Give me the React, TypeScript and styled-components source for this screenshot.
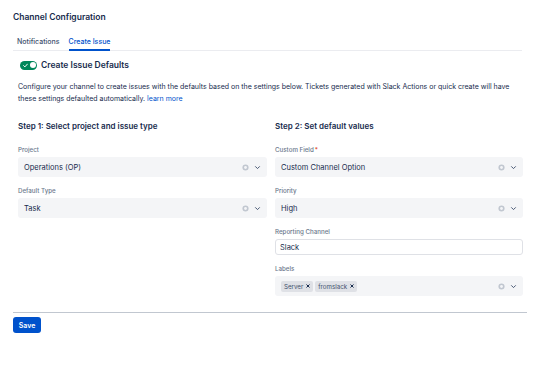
import React from "react"
import styled, { createGlobalStyle } from "styled-components"

const GlobalStyle = createGlobalStyle`
  body {
    margin: 0;
    background: #ffffff;
    font-family: Inter, "Liberation Sans", sans-serif;
    color: #172b4d;
  }
`

const Page = styled.div`
  width: 514px;
  padding: 11px 0 0 13px;
`

const Title = styled.h1`
  margin: 0;
  font-size: 8.5px;
  line-height: 12px;
  font-weight: 600;
`

const TabBar = styled.div`
  display: flex;
  gap: 9px;
  margin-top: 13px;
  padding-left: 4px;
  width: 505px;
  border-bottom: 1px solid #ebecf0;
`

const Tab = styled.div<{ $active?: boolean }>`
  font-size: 7px;
  line-height: 12px;
  padding-bottom: 1px;
  font-weight: 500;
  color: ${p => (p.$active ? "#0052cc" : "#42526e")};
  border-bottom: 2px solid ${p => (p.$active ? "#0052cc" : "transparent")};
  margin-bottom: -1px;
`

const Content = styled.div`
  padding: 0 4px 0 5px;
`

const ToggleRow = styled.div`
  display: flex;
  align-items: center;
  gap: 4px;
  margin-top: 8px;
  padding-left: 2px;
`

const Toggle = styled.div`
  position: relative;
  width: 17px;
  height: 9px;
  border-radius: 5px;
  background: #00875a;
`

const Knob = styled.div`
  position: absolute;
  right: 1.5px;
  top: 1.5px;
  width: 6px;
  height: 6px;
  border-radius: 50%;
  background: #ffffff;
`

const ToggleLabel = styled.span`
  font-size: 8.5px;
  line-height: 12px;
  font-weight: 600;
`

const Intro = styled.p`
  margin: 10px 0 0;
  font-size: 7px;
  line-height: 11.5px;
  color: #172b4d;
`

const Link = styled.a`
  color: #0052cc;
  text-decoration: none;
`

const Columns = styled.div`
  display: grid;
  grid-template-columns: 249px 248px;
  gap: 8px;
  margin-top: 16px;
`

const Column = styled.div`
  display: flex;
  flex-direction: column;
`

const StepTitle = styled.h2`
  margin: 0 0 13px;
  font-size: 8px;
  line-height: 12px;
  font-weight: 600;
`

const Field = styled.div`
  display: flex;
  flex-direction: column;
  & + & {
    margin-top: 9px;
  }
`

const Label = styled.label`
  font-size: 6.2px;
  line-height: 10px;
  margin-bottom: 2px;
  color: #6b778c;
  font-weight: 500;
`

const Required = styled.span`
  color: #de350b;
  margin-left: 1px;
`

const Select = styled.div`
  display: flex;
  align-items: center;
  height: 20px;
  padding: 0 6px;
  background: #f4f5f7;
  border-radius: 3px;
  font-size: 7.5px;
`

const Value = styled.span`
  flex: 1;
`

const Tags = styled.div`
  flex: 1;
  display: flex;
  gap: 2px;
`

const Tag = styled.span`
  display: flex;
  align-items: center;
  gap: 3px;
  height: 11px;
  padding: 0 3px;
  background: #dfe1e6;
  border-radius: 2px;
  font-size: 6.2px;
  color: #42526e;
`

const Input = styled.div`
  display: flex;
  align-items: center;
  height: 16px;
  box-sizing: border-box;
  padding: 0 4px;
  border: 1px solid #dfe1e6;
  border-radius: 3px;
  font-size: 7.5px;
`

const Icons = styled.div`
  display: flex;
  align-items: center;
  gap: 5px;
`

const Footer = styled.div`
  display: flex;
  margin-top: 16px;
  border-top: 1px solid #c1c7d0;
  padding-top: 4px;
`

const Button = styled.button`
  height: 16px;
  width: 28px;
  padding: 0;
  border: none;
  border-radius: 3px;
  background: #0052cc;
  color: #ffffff;
  font-family: inherit;
  font-size: 7px;
  font-weight: 600;
`

const ClearIcon = () => (
  <svg width="7" height="7" viewBox="0 0 16 16">
    <circle cx="8" cy="8" r="7" fill="#c1c7d0" />
    <circle cx="8" cy="8" r="3.2" fill="#f4f5f7" />
  </svg>
)

const Chevron = () => (
  <svg width="7" height="7" viewBox="0 0 16 16">
    <path d="M3.5 6l4.5 4.5L12.5 6" fill="none" stroke="#42526e" strokeWidth="2.2" strokeLinecap="round" strokeLinejoin="round" />
  </svg>
)

const SmallX = () => (
  <svg width="4" height="4" viewBox="0 0 8 8">
    <path d="M1.5 1.5l5 5M6.5 1.5l-5 5" stroke="#172b4d" strokeWidth="2" strokeLinecap="round" />
  </svg>
)

const Check = () => (
  <svg width="5" height="5" viewBox="0 0 8 8" style={{ position: "absolute", left: 2.5, top: 2 }}>
    <path d="M1 4.2l2 2L7 1.8" fill="none" stroke="#ffffff" strokeWidth="1.6" strokeLinecap="round" strokeLinejoin="round" />
  </svg>
)

const SelectField = ({ label, value, required }: { label: string; value: string; required?: boolean }) => (
  <Field>
    <Label>
      {label}
      {required && <Required>*</Required>}
    </Label>
    <Select>
      <Value>{value}</Value>
      <Icons>
        <ClearIcon />
        <Chevron />
      </Icons>
    </Select>
  </Field>
)

const App = (): JSX.Element => (
  <Page>
    <GlobalStyle />
    <Title>Channel Configuration</Title>
    <TabBar>
      <Tab>Notifications</Tab>
      <Tab $active>Create Issue</Tab>
    </TabBar>
    <Content>
      <ToggleRow>
        <Toggle>
          <Check />
          <Knob />
        </Toggle>
        <ToggleLabel>Create Issue Defaults</ToggleLabel>
      </ToggleRow>
      <Intro>
        Configure your channel to create issues with the defaults based on the settings below. Tickets generated with Slack Actions or quick create will have
        these settings defaulted automatically. <Link href="#">learn more</Link>
      </Intro>
      <Columns>
        <Column>
          <StepTitle>Step 1: Select project and issue type</StepTitle>
          <SelectField label="Project" value="Operations (OP)" />
          <SelectField label="Default Type" value="Task" />
        </Column>
        <Column>
          <StepTitle>Step 2: Set default values</StepTitle>
          <SelectField label="Custom Field" value="Custom Channel Option" required />
          <SelectField label="Priority" value="High" />
          <Field>
            <Label>Reporting Channel</Label>
            <Input>Slack</Input>
          </Field>
          <Field>
            <Label>Labels</Label>
            <Select>
              <Tags>
                <Tag>Server <SmallX /></Tag>
                <Tag>fromslack <SmallX /></Tag>
              </Tags>
              <Icons>
                <ClearIcon />
                <Chevron />
              </Icons>
            </Select>
          </Field>
        </Column>
      </Columns>
    </Content>
    <Footer>
      <Button>Save</Button>
    </Footer>
  </Page>
)

export default App
